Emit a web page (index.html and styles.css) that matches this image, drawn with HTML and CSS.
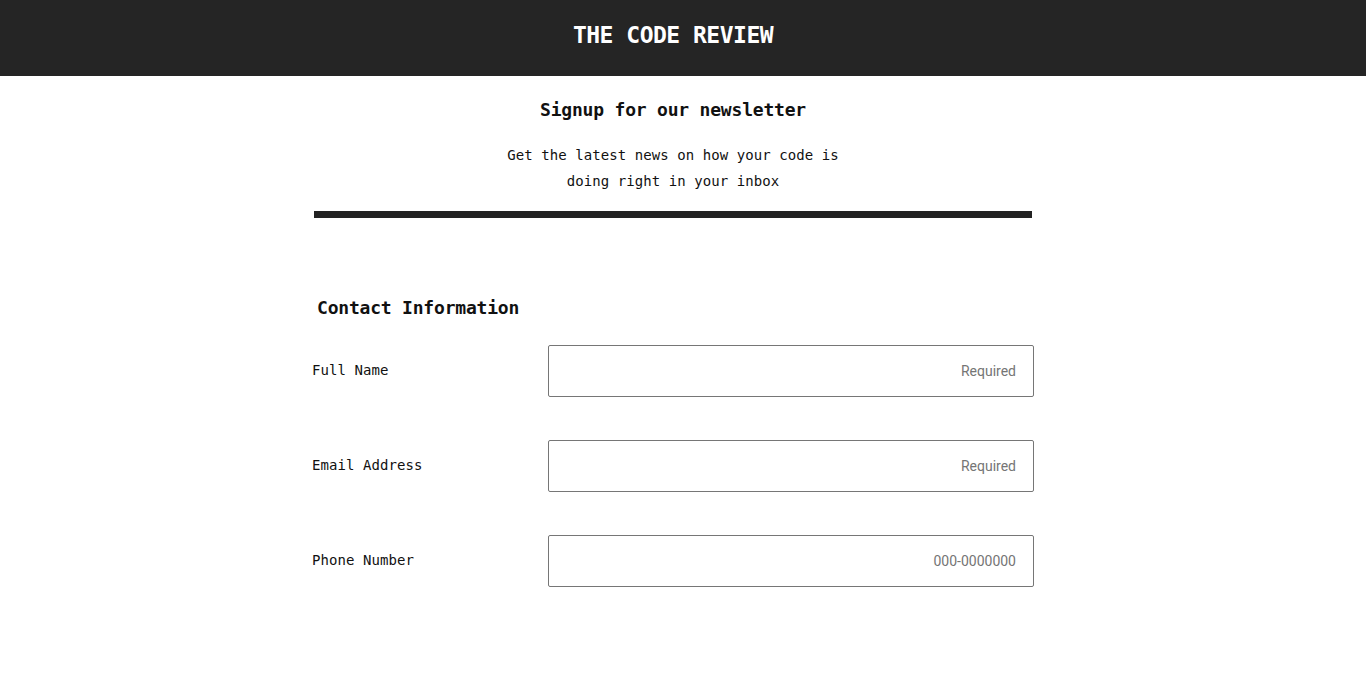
FILE: index.html
```html
<!DOCTYPE html>
<html lang="en">
<head>
<meta charset="utf-8">
<title>The Code Review</title>
<link rel="stylesheet" href="styles.css">
</head>
<body>
<header class="topbar">
  <h1 class="brand">THE CODE REVIEW</h1>
</header>
<main class="page">
  <section class="intro">
    <h2 class="intro-title">Signup for our newsletter</h2>
    <p class="intro-text">Get the latest news on how your code is<br>doing right in your inbox</p>
  </section>
  <div class="divider"></div>
  <form class="contact">
    <h3 class="contact-title">Contact Information</h3>
    <div class="row">
      <label class="label" for="name">Full Name</label>
      <input class="field" id="name" type="text" placeholder="Required">
    </div>
    <div class="row">
      <label class="label" for="email">Email Address</label>
      <input class="field" id="email" type="email" placeholder="Required">
    </div>
    <div class="row">
      <label class="label" for="phone">Phone Number</label>
      <input class="field" id="phone" type="tel" placeholder="000-0000000">
    </div>
  </form>
</main>
</body>
</html>
```
FILE: styles.css
```css
* { box-sizing: border-box; }
html, body { margin: 0; padding: 0; background: #fff; }
body {
  font-family: "DejaVu Sans Mono", "Liberation Mono", monospace;
  color: #111;
}
.topbar {
  background: #252525;
  height: 76px;
  display: flex;
  align-items: center;
  justify-content: center;
  padding-right: 20px;
  padding-bottom: 7px;
}
.brand {
  margin: 0;
  color: #fff;
  font-size: 23px;
  font-weight: bold;
  letter-spacing: -0.5px;
}
.page {
  width: 722px;
  margin-left: calc(50% - 371px);
}
.intro {
  text-align: center;
  padding-top: 21px;
}
.intro-title {
  margin: 0;
  font-size: 18px;
  line-height: 26px;
  font-weight: bold;
  letter-spacing: -0.2px;
}
.intro-text {
  margin: 19px 0 0;
  font-size: 14px;
  line-height: 26px;
  letter-spacing: 0.07px;
}
.divider {
  margin: 17px 0 0 2px;
  width: 718px;
  height: 7px;
  background: #222;
}
.contact {
  padding-top: 77px;
}
.contact-title {
  margin: 0 0 24px 5px;
  font-size: 18px;
  line-height: 26px;
  font-weight: bold;
  letter-spacing: -0.2px;
}
.row {
  display: flex;
  align-items: center;
  margin-bottom: 43px;
}
.label {
  width: 236px;
  font-size: 14px;
  letter-spacing: 0.07px;
  padding-bottom: 3px;
}
.field {
  width: 486px;
  height: 52px;
  border: 1px solid #767676;
  border-radius: 2px;
  padding: 0 17px;
  text-align: right;
  font-family: Roboto, "Liberation Sans", sans-serif;
  font-size: 14px;
  color: #222;
  background: #fff;
}
.field::placeholder { color: #757575; }
```
